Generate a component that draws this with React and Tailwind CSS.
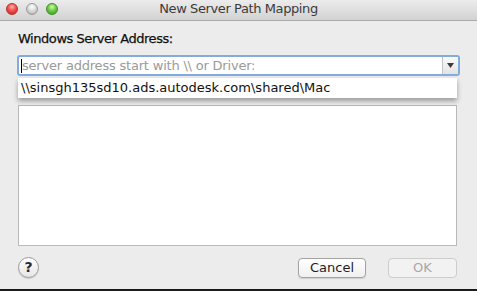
import { useState } from "react";

const font = { fontFamily: '"DejaVu Sans", "Liberation Sans", sans-serif' };

function Light({ color }) {
  const fills = {
    red: "bg-[radial-gradient(circle_at_50%_30%,#ffb3b0_0%,#f0504a_45%,#c4221c_100%)] border-[#b8322d]",
    gray: "bg-[radial-gradient(circle_at_50%_30%,#ffffff_0%,#d6d6d6_50%,#a9a9a9_100%)] border-[#9a9a9a]",
    green: "bg-[radial-gradient(circle_at_50%_30%,#d6f7b6_0%,#6fcb45_45%,#33951e_100%)] border-[#3d8f28]",
  };
  return <div className={`w-[12px] h-[12px] rounded-full border ${fills[color]}`} />;
}

export default function App() {
  const [value] = useState("");

  return (
    <div className="w-[477px] h-[291px] bg-[#1b1b1b] overflow-hidden" style={font}>
      <div className="h-[289px] bg-[#ececec] flex flex-col">
        <div className="relative h-[21px] shrink-0 bg-gradient-to-b from-[#ececec] to-[#d2d2d2] border-b border-[#a9a9a9] flex items-center">
          <div className="flex gap-[8px] pl-[6px] pb-[2px]">
            <Light color="red" />
            <Light color="gray" />
            <Light color="green" />
          </div>
          <div className="absolute inset-0 flex items-center justify-center pb-[2px] text-[13px] tracking-[-0.4px] text-[#3b3b3b]">
            New Server Path Mapping
          </div>
        </div>

        <div className="flex-1 flex flex-col px-[17px] pt-[10px]">
          <div className="text-[13px] leading-[16px] tracking-[-0.45px] text-[#111] pl-[1px] [-webkit-text-stroke:0.25px_#111]">
            Windows Server Address:
          </div>

          <div className="relative mt-[8px]">
            <div className="h-[21px] rounded-[3px] border-2 border-[#82acdf] bg-white flex items-stretch">
              <div className="flex-1 flex items-center pl-[2px]">
                <div className="w-px h-[14px] bg-black" />
                <span className="text-[13px] tracking-[-0.2px] text-[#9a9a9a] leading-none">
                  {value || "server address start with \\\\ or Driver:"}
                </span>
              </div>
              <div className="w-[16px] border-l border-[#c4c4c4] bg-gradient-to-b from-[#fafafa] to-[#e3e3e3] flex items-center justify-center">
                <svg width="7" height="5" viewBox="0 0 7 5">
                  <path d="M0 0h7L3.5 5z" fill="#3a3a3a" />
                </svg>
              </div>
            </div>

            <div className="absolute left-[1px] right-[3px] top-[23px] h-[20px] bg-white shadow-[0_3px_5px_rgba(0,0,0,0.35)] flex items-center pl-[3px] text-[13px] text-[#111] z-10">
              \\sinsgh135sd10.ads.autodesk.com\shared\Mac
            </div>
          </div>

          <div className="mt-[29px] ml-[1px] mr-[3px] h-[141px] bg-white border border-[#b9b9b9]" />

          <div className="mt-[11px] flex items-center pr-[3px]">
            <div className="ml-[1px] w-[21px] h-[21px] rounded-full border border-[#9c9c9c] bg-gradient-to-b from-white to-[#e6e6e6] shadow-[0_1px_1px_rgba(0,0,0,0.15)] flex items-center justify-center text-[14px] font-bold text-[#2a2a2a]">
              ?
            </div>
            <div className="flex-1" />
            <button className="w-[68px] h-[20px] rounded-[4px] border border-[#a3a3a3] bg-gradient-to-b from-white to-[#f0f0f0] shadow-[0_1px_1px_rgba(0,0,0,0.12)] text-[13px] text-[#1e1e1e] leading-none">
              Cancel
            </button>
            <button className="ml-[22px] w-[69px] h-[20px] rounded-[4px] border border-[#cdcdcd] bg-[#f2f2f2] text-[13px] text-[#a8a8a8] leading-none">
              OK
            </button>
          </div>
        </div>
      </div>
    </div>
  );
}
